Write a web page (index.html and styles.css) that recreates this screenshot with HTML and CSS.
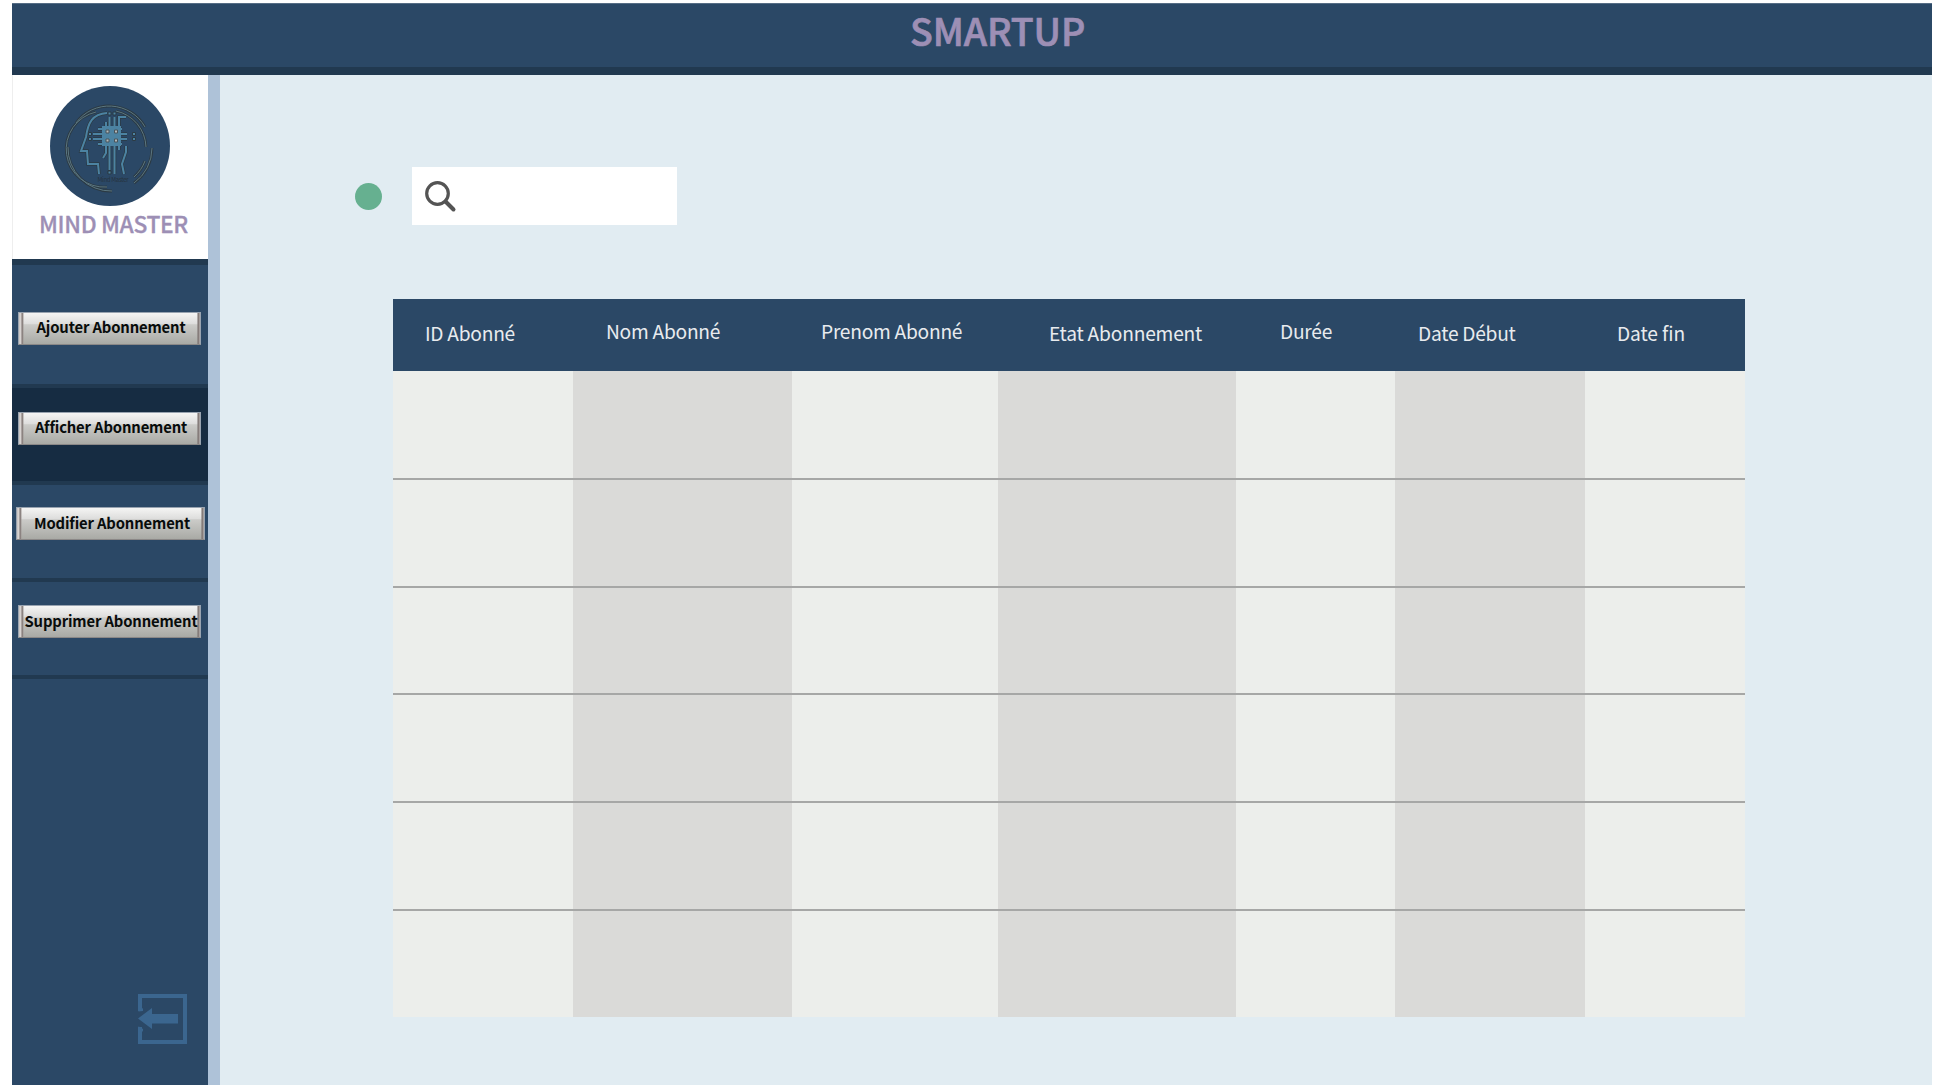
FILE: index.html
```html
<!DOCTYPE html>
<html lang="fr">
<head>
<meta charset="utf-8">
<title>Smartup</title>
<link rel="stylesheet" href="styles.css">
</head>
<body>
<div class="app">
  <header class="topbar"><h1 class="title">SMARTUP</h1></header>
  <div class="body">
    <aside class="sidebar">
      <div class="brand">
        <svg class="logo" width="120" height="120" viewBox="0 0 120 120">
          <circle cx="60" cy="60" r="60" fill="#2b4866"/>
          <g fill="none" stroke="#2b3a44" stroke-width="2.8">
            <path d="M26 37A41 41 0 0 1 95 41M46 26A38 38 0 0 0 57 101M66 25A38 38 0 0 1 96 61M18 61A43 43 0 0 0 62 105M102 62A43 43 0 0 1 84 97M95 75A40 40 0 0 1 84 91"/>
          </g>
          <g fill="none" stroke="#5b7680" stroke-width="1">
            <path d="M26 37A41 41 0 0 1 95 41M46 26A38 38 0 0 0 57 101M66 25A38 38 0 0 1 96 61M18 61A43 43 0 0 0 62 105M102 62A43 43 0 0 1 84 97M95 75A40 40 0 0 1 84 91"/>
          </g>
          <g fill="none" stroke="#2b3a44" stroke-width="3.4">
            <path d="M57 27C42 28 38 37 36 51L31 65H37L38 78H48L49 88M59.500 31V88M64.500 31V88M56 36V41M69 41V31H76M48 43H72M43 48H77M43 53H77M48 58H72M56 59V67L53 72M69 58V64M76 60V66L72 78L74 88"/>
          </g>
          <g fill="none" stroke="#4c83a2" stroke-width="2">
            <path d="M57 27C42 28 38 37 36 51L31 65H37L38 78H48L49 88M59.500 31V84M64.500 31V88M56 36V41M69 41V31H76M48 43H72M43 48H77M43 53H77M48 58H72M56 59V67L53 72M69 58V64M76 60V66L72 78L74 88"/>
          </g>
          <rect x="52" y="40" width="19" height="20" fill="#4c83a2"/>
          <path d="M58 26h3v3h-3zM63 26h3v3h-3zM38.500 46.500h3v3h-3zM38.500 51.500h3v3h-3zM82.500 46.500h3v3h-3zM82.500 51.500h3v3h-3zM58 85h3v3h-3z" fill="#4c83a2" stroke="#2b3a44"/>
          <path d="M56 44h3v3h-3zM64.500 44h3v3h-3zM56 53h3v3h-3zM64.500 53h3v3h-3z" fill="#b4babb" stroke="#4a545a"/>
          <text class="logo-text" x="63" y="96" text-anchor="middle" textLength="31">Mind Master</text>
        </svg>
        <div class="brand-name">MIND MASTER</div>
      </div>
      <nav class="menu">
        <div class="item item-first"><button class="btn"><span>Ajouter Abonnement</span></button></div>
        <div class="item active"><button class="btn"><span>Afficher Abonnement</span></button></div>
        <div class="item item-third"><button class="btn wide low"><span>Modifier Abonnement</span></button></div>
        <div class="item"><button class="btn low"><span>Supprimer Abonnement</span></button></div>
      </nav>
      <svg class="exit" width="49" height="50" viewBox="0 0 49 50">
        <path d="M2 17V2H47V48H2V33" fill="none" stroke="#3b668f" stroke-width="4"/>
        <path d="M0 17.500L5 14V17zM0 32L5 35V38z" fill="#3b668f"/>
        <path d="M0 24.500L14 14V20H40V29.500H14V35z" fill="#3b668f"/>
      </svg>
    </aside>
    <main class="content">
      <div class="search-row">
        <span class="dot"></span>
        <label class="search">
          <svg width="32" height="32" viewBox="0 0 32 32" fill="none" stroke="#545454" stroke-linecap="round">
            <circle cx="12.500" cy="12.500" r="10.800" stroke-width="3.200"/>
            <path d="M20.500 20.500L28.500 28.500" stroke-width="4"/>
          </svg>
        </label>
      </div>
      <div class="table">
        <div class="row head">
          <span class="c1">ID Abonné</span><span class="c2 up">Nom Abonné</span><span class="c3 up">Prenom Abonné</span><span class="c4">Etat Abonnement</span><span class="c5 up">Durée</span><span class="c6">Date Début</span><span class="c7">Date fin</span>
        </div>
        <div class="row first"></div>
        <div class="row"></div>
        <div class="row"></div>
        <div class="row"></div>
        <div class="row"></div>
        <div class="row"></div>
      </div>
    </main>
  </div>
</div>
</body>
</html>
```
FILE: styles.css
```css
* { box-sizing: border-box; }
body { margin: 0; background: #fff; font-family: "Noto Sans CJK SC", "Noto Sans", sans-serif; overflow: hidden; }
.app { width: 1920px; height: 1082px; margin: 3px 0 0 12px; display: flex; flex-direction: column; }
.topbar { height: 72px; background: #2b4866; border-top: 1px solid #566d85; border-bottom: 8px solid #213950; }
.title { margin: 0; padding-left: 898px; font-size: 37.5px; line-height: 51px; letter-spacing: -0.1px; font-weight: 500; color: #9d8fb5; -webkit-text-stroke: 0.7px #9d8fb5; white-space: nowrap; }
.body { flex: 1; display: flex; }
.sidebar { width: 208px; background: #2b4866; border-right: 12px solid #aec2d8; display: flex; flex-direction: column; }
.brand { height: 184px; background: #fff; padding: 11px 0 0 37px; border-left: 1px solid #eee; }
.logo { display: block; }
.logo-text { font-size: 6px; fill: #26333e; }
.brand-name { margin-left: -11px; font-size: 22.8px; line-height: 36px; letter-spacing: -0.35px; font-weight: 500; color: #9d8fb5; -webkit-text-stroke: 0.3px #9d8fb5; white-space: nowrap; }
.menu { border-top: 6px solid #213950; }
.item { height: 97px; padding: 23px 0 0 6px; border-bottom: 4px solid #213950; }
.item-first { height: 123px; padding-top: 47px; }
.active { background: #162c42; padding-top: 24px; }
.item-third { padding: 22px 0 0 4px; }
.btn {
  display: flex; align-items: center; justify-content: center; width: 183px; height: 33px; padding: 0 0 5px 3px;
  border: 1px solid #98a3b0; border-bottom-color: #8b8887; font: bold 14.8px "Noto Sans CJK SC", sans-serif; letter-spacing: -0.14px; color: #080c0b; white-space: nowrap;
  background:
    linear-gradient(90deg, #c5c0be 0, #ddd9d7 2px, #756b69 3px, #a19a97 4px, transparent 5px) left / 6px 100% no-repeat,
    linear-gradient(270deg, #b5afad 0, #756b69 2px, transparent 3px) right / 4px 100% no-repeat,
    linear-gradient(#f5f5f4 0, #dededd 34%, #cbcbc8 38%, #a9aaa5 100%);
}
.wide { width: 189px; }
.low { padding-bottom: 3px; }
.exit { margin: auto 0 41px 126px; }
.content { flex: 1; background: #e1ecf2; padding: 92px 0 0 135px; }
.search-row { display: flex; align-items: center; gap: 30px; height: 58px; }
.dot { width: 27px; height: 27px; border-radius: 50%; background: #66b090; }
.search { width: 265px; height: 58px; background: #fff; padding: 14px 0 0 13px; }
.table { margin: 74px 0 0 38px; width: 1352px; }
.row { height: 107.7px; border-bottom: 2px solid #a6a7a6; background: linear-gradient(90deg, #eceeeb 180px, #dadad8 180px 399px, #eceeeb 399px 605px, #dadad8 605px 843px, #eceeeb 843px 1002px, #dadad8 1002px 1192px, #eceeeb 1192px); }
.first { height: 109px; }
.row:last-child { height: 106.2px; border-bottom: 0; }
.head { display: grid; grid-template-columns: 180px 219px 206px 238px 159px 190px 160px; height: 72px; border: 0; background: #2b4866; color: #e8ebee; font-size: 19.2px; line-height: 29px; letter-spacing: -0.26px; white-space: nowrap; }
.head span { padding-top: 20px; }
.head .up { padding-top: 18px; }
.head .c1 { padding-left: 32px; }
.head .c2 { padding-left: 33px; }
.head .c3 { padding-left: 29px; }
.head .c4 { padding-left: 51px; letter-spacing: -0.2px; }
.head .c5 { padding-left: 44px; }
.head .c6 { padding-left: 23px; }
.head .c7 { padding-left: 32px; letter-spacing: -0.1px; }
```
